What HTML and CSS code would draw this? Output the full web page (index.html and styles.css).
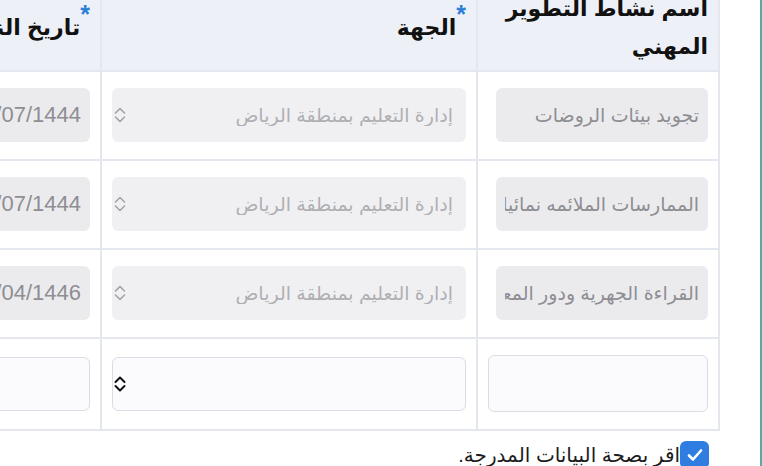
FILE: index.html
```html
<!DOCTYPE html>
<html lang="ar" dir="rtl">
<head>
  <meta charset="UTF-8">
  <title>أنشطة التطوير المهني</title>
  <link rel="stylesheet" href="styles.css">
</head>
<body>
  <div class="card">
    <div class="table-wrap">
      <table class="grid">
        <colgroup>
          <col class="col-name">
          <col class="col-org">
          <col class="col-date">
          <col class="col-hours">
        </colgroup>
        <thead>
          <tr>
            <th>اسم نشاط التطوير المهني</th>
            <th><span class="req">*</span>الجهة</th>
            <th><span class="req">*</span>تاريخ النشاط</th>
            <th><span class="req">*</span>عدد الساعات</th>
          </tr>
        </thead>
        <tbody>
          <tr>
            <td><input class="field field-name" type="text" value="تجويد بيئات الروضات" disabled></td>
            <td>
              <div class="select-box">
                <select class="field" disabled><option>إدارة التعليم بمنطقة الرياض</option></select>
                <svg width="14" height="20" viewBox="0 0 14 20"><path d="M2.5 8 L7 3.5 L11.5 8 M2.5 12 L7 16.5 L11.5 12" fill="none" stroke="#a3a3a8" stroke-width="1.6" stroke-linecap="round" stroke-linejoin="round"/></svg>
              </div>
            </td>
            <td><input class="field field-date" type="text" value="12/07/1444" disabled></td>
            <td><input class="field" type="text" value="6" disabled></td>
          </tr>
          <tr>
            <td><input class="field field-name" type="text" value="الممارسات الملائمه نمائيا" disabled></td>
            <td>
              <div class="select-box">
                <select class="field" disabled><option>إدارة التعليم بمنطقة الرياض</option></select>
                <svg width="14" height="20" viewBox="0 0 14 20"><path d="M2.5 8 L7 3.5 L11.5 8 M2.5 12 L7 16.5 L11.5 12" fill="none" stroke="#a3a3a8" stroke-width="1.6" stroke-linecap="round" stroke-linejoin="round"/></svg>
              </div>
            </td>
            <td><input class="field field-date" type="text" value="19/07/1444" disabled></td>
            <td><input class="field" type="text" value="4" disabled></td>
          </tr>
          <tr>
            <td><input class="field field-name" type="text" value="القراءة الجهرية ودور المعلمة" disabled></td>
            <td>
              <div class="select-box">
                <select class="field" disabled><option>إدارة التعليم بمنطقة الرياض</option></select>
                <svg width="14" height="20" viewBox="0 0 14 20"><path d="M2.5 8 L7 3.5 L11.5 8 M2.5 12 L7 16.5 L11.5 12" fill="none" stroke="#a3a3a8" stroke-width="1.6" stroke-linecap="round" stroke-linejoin="round"/></svg>
              </div>
            </td>
            <td><input class="field field-date" type="text" value="27/04/1446" disabled></td>
            <td><input class="field" type="text" value="3" disabled></td>
          </tr>
          <tr class="new-row">
            <td><input class="field field-new field-tall" type="text"></td>
            <td>
              <div class="select-box">
                <select class="field field-new"><option></option></select>
                <svg width="14" height="20" viewBox="0 0 14 20"><path d="M2.5 8 L7 3.5 L11.5 8 M2.5 12 L7 16.5 L11.5 12" fill="none" stroke="#111" stroke-width="2" stroke-linecap="round" stroke-linejoin="round"/></svg>
              </div>
            </td>
            <td><input class="field field-new" type="text"></td>
            <td><input class="field field-new" type="text"></td>
          </tr>
        </tbody>
      </table>
    </div>

    <label class="confirm">
      <span class="check">
        <svg width="18" height="16" viewBox="0 0 18 16"><path d="M3 8.5 L7 12.5 L15 3.5" fill="none" stroke="#fff" stroke-width="2.6" stroke-linecap="round" stroke-linejoin="round"/></svg>
      </span>
      اقر بصحة البيانات المدرجة.
    </label>
  </div>
</body>
</html>
```

FILE: styles.css
```css
* {
  margin: 0;
  padding: 0;
  box-sizing: border-box;
}

html {
  direction: rtl;
}

body {
  font-family: "Liberation Sans", "DejaVu Sans", sans-serif;
  background: #fff;
  color: #1c1c1e;
  overflow: hidden;
}

.card {
  margin-top: -24px;
  padding-right: 40px;
  border-right: 2px solid #5aa9a8;
  min-height: 520px;
}

.table-wrap {
  overflow: hidden;
}

.grid {
  border-collapse: collapse;
  table-layout: fixed;
  width: 1040px;
}

.col-name { width: 242px; }
.col-org { width: 376px; }
.col-date { width: 222px; }
.col-hours { width: 200px; }

.grid th,
.grid td {
  border: 2px solid #e4e7ee;
  text-align: right;
  vertical-align: middle;
}

.grid th {
  background: #eef0f7;
  padding: 12px 10px 4px;
  font-size: 22px;
  line-height: 38px;
  font-weight: bold;
  color: #111;
}

.req {
  color: #2a7ed8;
  font-size: 25px;
  vertical-align: 12px;
  line-height: 0;
}

.grid td {
  padding: 16px 10px 17px;
}

.field {
  display: block;
  width: 100%;
  height: 54px;
  border: none;
  border-radius: 6px;
  background: #ebebee;
  color: #8e8e93;
  font-family: inherit;
  font-size: 19px;
  padding: 0 9px;
  text-align: right;
  direction: rtl;
  appearance: none;
  -webkit-appearance: none;
  outline: none;
}

.select-box .field {
  padding-right: 13px;
}

.field-name {
  width: 212px;
  margin-right: 0;
  margin-left: auto;
}

.field-date {
  font-size: 22px;
}

.field-new {
  background: #fbfbfd;
  border: 1.5px solid #dcdde2;
  color: #111;
}

.field-tall {
  height: 57px;
}

.select-box {
  position: relative;
}

.select-box svg {
  position: absolute;
  left: 1px;
  top: 50%;
  transform: translateY(-50%);
}

.confirm {
  display: flex;
  align-items: center;
  padding-right: 11px;
  margin-top: 10px;
  font-size: 20px;
  color: #1c1c1e;
}

.check {
  width: 29px;
  height: 28px;
  background: #2f7de1;
  border-radius: 6px;
  display: flex;
  align-items: center;
  justify-content: center;
}
```
